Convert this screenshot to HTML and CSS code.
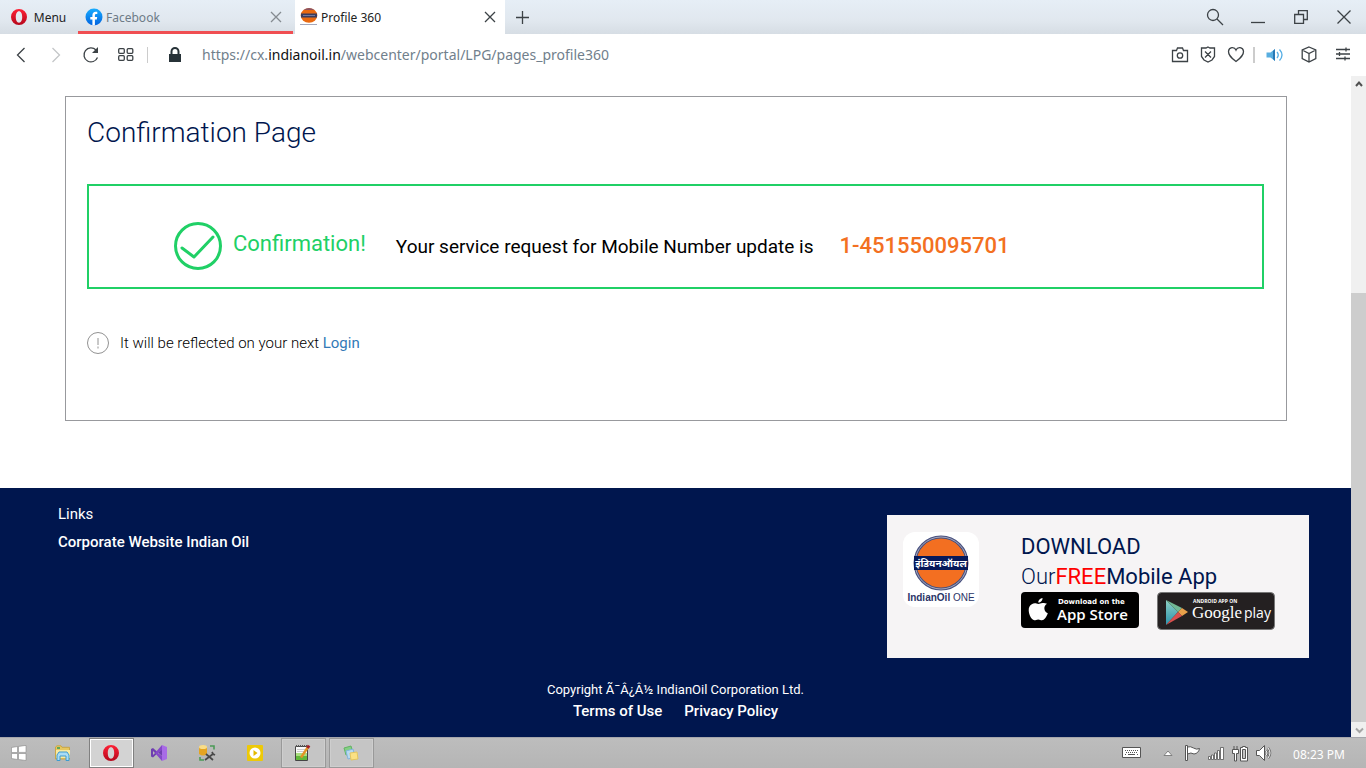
FILE: index.html
```html
<!DOCTYPE html>
<html lang="en">
<head>
<meta charset="utf-8">
<meta name="viewport" content="width=device-width, initial-scale=1">
<title>Profile 360</title>
<link rel="stylesheet" href="styles.css">
</head>
<body>
<svg class="defs" aria-hidden="true">
  <defs>
    <linearGradient id="opera" x1="0" y1="0" x2="0" y2="1"><stop offset="0" stop-color="#ff2136"/><stop offset="1" stop-color="#b5071b"/></linearGradient>
    <linearGradient id="fb" x1="0" y1="0" x2="0" y2="1"><stop offset="0" stop-color="#18acfe"/><stop offset="1" stop-color="#0163e0"/></linearGradient>
    <linearGradient id="playfill" x1="0" y1="0" x2="0" y2="1"><stop offset="0" stop-color="#8fd0c4"/><stop offset="1" stop-color="#2b93ad"/></linearGradient>
    <symbol id="opera-o" viewBox="0 0 18 18"><path fill="url(#opera)" fill-rule="evenodd" d="M9 1a8 8 0 1 0 0 16A8 8 0 0 0 9 1zm0 2.300c2.100 0 3.200 2.500 3.200 5.700s-1.100 5.700-3.200 5.700S5.800 12.200 5.800 9 6.900 3.300 9 3.300z"/></symbol>
  </defs>
</svg>

<header class="tabstrip">
  <button class="menu" type="button"><svg width="18" height="18"><use href="#opera-o"/></svg>Menu</button>
  <div class="tab tab-alert">
    <svg width="18" height="18" viewBox="0 0 18 18"><circle cx="9" cy="9" r="8.500" fill="url(#fb)"/><path fill="#fff" d="M7.400 17.500v-6H5.300V9h2.100V7.300c0-2.300 1.300-3.500 3.200-3.500.9 0 1.700.1 1.700.1v2h-1c-1.100 0-1.400.7-1.400 1.300V9h2.300l-.4 2.500H9.900v6z"/></svg>
    <span class="tab-title">Facebook</span>
    <button type="button" class="tab-close" aria-label="Close Facebook"><svg width="12" height="12" viewBox="0 0 12 12"><path d="M1 1l10 10M11 1L1 11"/></svg></button>
  </div>
  <div class="tab tab-active">
    <svg width="18" height="18" viewBox="0 0 18 18"><ellipse cx="9" cy="7.500" rx="8.300" ry="7.300" fill="#e9690f"/><path fill="#8d5360" d="M3.500 2Q9-1.800 14.500 2z"/><path fill="#3a3d5f" d="M1 5.500h16v4H1z"/><path stroke="#77799a" d="M3 7.500h12"/><path stroke="#a3a7bb" d="M0 16.500h17"/></svg>
    <span class="tab-title">Profile 360</span>
    <button type="button" class="tab-close" aria-label="Close Profile 360"><svg width="12" height="12" viewBox="0 0 12 12"><path d="M1 1l10 10M11 1L1 11"/></svg></button>
  </div>
  <button type="button" class="new-tab" aria-label="New tab"><svg width="13" height="13" viewBox="0 0 13 13"><path d="M6.500 0v13M0 6.500h13"/></svg></button>
  <div class="window-buttons">
    <button type="button" aria-label="Search tabs"><svg width="18" height="18" viewBox="0 0 18 18"><circle cx="7" cy="7" r="5.500"/><path d="M11 11l6 6"/></svg></button>
    <button type="button" aria-label="Minimize"><svg width="14" height="14" viewBox="0 0 14 14"><path d="M0 12.500h14"/></svg></button>
    <button type="button" aria-label="Restore"><svg width="14" height="14" viewBox="0 0 14 14"><path d="M.7 4.500h8.800v8.800H.7zM4.500 4.500V.7h8.800v8.800H9.500"/></svg></button>
    <button type="button" aria-label="Close window"><svg width="14" height="14" viewBox="0 0 14 14"><path d="M.5.5l13 13M13.500.5l-13 13"/></svg></button>
  </div>
</header>

<nav class="addressbar" aria-label="Browser toolbar">
  <button type="button" aria-label="Back"><svg width="16" height="16" viewBox="0 0 16 16"><path d="M11.500 1L4.500 8l7 7"/></svg></button>
  <button type="button" class="faded" aria-label="Forward" disabled><svg width="16" height="16" viewBox="0 0 16 16"><path d="M4.500 1l7 7-7 7"/></svg></button>
  <button type="button" aria-label="Reload"><svg width="18" height="18" viewBox="0 0 18 18"><path d="M15.500 11.500A7 7 0 1 1 14 4"/><path class="solid" d="M16 1v6h-6z"/></svg></button>
  <button type="button" aria-label="Speed dial"><svg width="16" height="16" viewBox="0 0 16 16"><rect x=".7" y="1.700" width="5.600" height="4.600" rx="1"/><rect x="9.200" y="1.700" width="5.600" height="4.600" rx="1"/><rect x=".7" y="8.700" width="5.600" height="4.600" rx="1"/><rect x="9.200" y="8.700" width="5.600" height="4.600" rx="1"/></svg></button>
  <span class="divider"></span>
  <svg class="lock" width="14" height="18" viewBox="0 0 14 18"><path fill="#273238" d="M1 8h12v8H1z"/><path fill="none" stroke="#273238" stroke-width="2" d="M3.500 8V5.500a3.500 3.500 0 0 1 7 0V8"/></svg>
  <span class="url" role="textbox" contenteditable="true" spellcheck="false" aria-label="Address">https://cx.<b>indianoil.in</b>/webcenter/portal/LPG/pages_profile360</span>
  <button type="button" class="tool" aria-label="Snapshot"><svg width="18" height="16" viewBox="0 0 18 16"><path d="M1.500 3.500h4L6.500 1h5l1 2.500h4v11h-15z"/><circle cx="9" cy="8.500" r="2.700"/></svg></button>
  <button type="button" class="tool" aria-label="Ad blocker"><svg width="16" height="17" viewBox="0 0 16 17"><path d="M8 1l2 1h4.500v8.500L12 14l-4 2-4-2-2.500-3.500V2H6zM5 5.500l6 6M11 5.500l-6 6"/></svg></button>
  <button type="button" class="tool" aria-label="Bookmark"><svg width="18" height="17" viewBox="0 0 18 17"><path d="M9 4C7.500.5 2 .6 1.500 5.200 1.200 9.500 5 12.300 9 15.500c4-3.200 7.800-6 7.500-10.300C16 .6 10.500.5 9 4z"/></svg></button>
  <span class="divider divider-short"></span>
  <button type="button" class="extension" aria-label="Volume"><svg width="18" height="16" viewBox="0 0 18 16"><path fill="#58aee0" stroke="none" d="M.5 5.500h4L9 2v12l-4.500-3.500h-4z"/><path fill="#2878b5" stroke="none" d="M7 4l2-2v12l-2-2z"/><path class="wave" d="M11 5q2.500 3 0 6M13.500 2.500q5 5.500 0 11"/></svg></button>
  <button type="button" class="extension" aria-label="Extensions"><svg width="16" height="17" viewBox="0 0 16 17"><path d="M8 1l6.800 3v8.500L8 16l-6.800-3.500V4zM1.200 4L8 7.500 14.800 4M8 7.500V16"/></svg></button>
  <button type="button" class="extension" aria-label="Easy setup"><svg width="14" height="15" viewBox="0 0 14 15"><path d="M0 2.500h14M0 7h14M0 11.500h14M10 .5v4M3.500 5v4M9 9.500v4"/></svg></button>
</nav>

<div class="viewport">
  <div class="page">
    <main class="panel">
      <h1>Confirmation Page</h1>
      <section class="notice">
        <svg class="tick" width="48" height="48" viewBox="0 0 48 48"><circle cx="24" cy="24" r="22.500"/><path d="M8 26l12 9L39 15" stroke-linejoin="round" stroke-linecap="round"/></svg>
        <h2>Confirmation!</h2>
        <p>Your service request for Mobile Number update is</p>
        <strong>1-451550095701</strong>
      </section>
      <p class="hint">
        <svg width="22" height="22" viewBox="0 0 22 22"><circle cx="11" cy="11" r="10.500"/><path d="M11 6v7M11 14.500v2"/></svg>
        <span>It will be reflected on your next <a href="#login">Login</a></span>
      </p>
    </main>

    <footer class="footer">
      <div class="footer-top">
        <div class="links">
          <span>Links</span>
          <a href="#corporate">Corporate Website Indian Oil</a>
        </div>
        <aside class="app-card">
          <svg class="app-logo" width="76" height="76" viewBox="0 0 76 76">
            <rect width="76" height="75" rx="12" fill="#fff"/>
            <circle cx="38" cy="31" r="26" fill="#f36f21" stroke="#47507f" stroke-width="3"/>
            <circle cx="38" cy="31" r="26" fill="none" stroke="#a9a9bd" stroke-width="1"/>
            <path fill="#07195a" d="M11 24h54v14H11z"/>
            <text class="logo-hindi" x="38" y="35" text-anchor="middle">इंडियनऑयल</text>
            <text class="logo-name" x="38" y="69" text-anchor="middle"><tspan class="logo-bold">IndianOil</tspan> ONE</text>
          </svg>
          <div class="app-copy">
            <div>DOWNLOAD</div>
            <div><span class="thin">Our</span><span class="free">FREE</span>Mobile App</div>
            <div class="badges">
              <a href="#appstore" aria-label="Download on the App Store">
                <svg width="118" height="36" viewBox="0 0 118 36">
                  <rect width="118" height="36" rx="4"/>
                  <path fill="#fff" d="M21.500 6c.2 2.500-2 4.600-4.200 4.500-.2-2.200 2-4.400 4.200-4.500zM26 11.800c-4 2.300-3.200 8 .8 9.500-1.500 4-3.500 7-5.800 7-1.500 0-2-.9-3.800-.9s-2.400.9-3.800.9c-3.400 0-7.300-9-5-13.500 1.300-2.700 3.800-3.900 6.300-3.600 1.200.1 2 .7 2.900.7 1 0 2-.9 4-.9 1.800 0 3.300.5 4.400.8z"/>
                  <text class="store-small" x="37" y="12">Download on the</text>
                  <text class="store-name" x="36" y="28">App Store</text>
                </svg>
              </a>
              <a href="#googleplay" aria-label="Android app on Google Play">
                <svg width="118" height="38" viewBox="0 0 118 38">
                  <rect x=".5" y=".5" width="117" height="37" rx="4" fill="#242021" stroke="#777"/>
                  <path fill="url(#playfill)" d="M9 8l12 12L9 33z"/><path fill="#71b894" d="M9 8l16 8-4 4z"/><path fill="#e9a14b" d="M25 16l6 4-6 4-4-4z"/><path fill="#d9504e" d="M9 33l12-13 4 4z"/>
                  <text class="play-small" x="36" y="11">ANDROID APP ON</text>
                  <text class="play-google" x="35" y="26">Google</text>
                  <text class="play-name" x="87" y="26">play</text>
                </svg>
              </a>
            </div>
          </div>
        </aside>
      </div>
      <div class="legal">
        <span>Copyright Ã¯Â¿Â½ IndianOil Corporation Ltd.</span>
        <div class="legal-links"><a href="#terms">Terms of Use</a><a href="#privacy">Privacy Policy</a></div>
      </div>
    </footer>
  </div>
  <div class="scrollbar" aria-hidden="true">
    <svg width="15" height="15" viewBox="0 0 15 15"><path stroke="#505050" d="M5 10l3-3.500 3 3.500"/></svg>
    <span class="track"></span>
    <span class="thumb"></span>
    <svg width="15" height="15" viewBox="0 0 15 15"><path stroke="#a5a5a5" d="M5 6.500l3.500 3.500L12 6.500"/></svg>
  </div>
</div>

<div class="taskbar">
  <button type="button" class="task start" aria-label="Start"><svg width="16" height="16" viewBox="0 0 16 16"><path fill="#fff" stroke="#888" stroke-width=".6" d="M.5 2.500l6-1v6h-6zM7.500 1.400l7.500-1v7H7.500zM.5 8.500h6v6l-6-1zM7.500 8.500H15v7l-7.500-1z"/></svg></button>
  <button type="button" class="task" aria-label="File Explorer"><svg width="18" height="16" viewBox="0 0 18 16"><path fill="#e6c760" stroke="#c9a648" d="M1.500 14V2L3 .8h4l1 1.500h7.500V14z"/><path fill="#f8e9a1" d="M2 5h14v8H2z"/><path fill="#5fa85b" d="M3 2h3v2H3z"/><path fill="#a9dcf6" stroke="#3f9bcf" d="M3 15.500V10l2-3h8l2 3v5.500h-3V11H6v4.500z"/></svg></button>
  <button type="button" class="task task-current" aria-label="Opera"><svg width="18" height="18"><use href="#opera-o"/></svg></button>
  <button type="button" class="task" aria-label="Visual Studio"><svg width="18" height="18" viewBox="0 0 18 18"><path fill="#6f3fb0" fill-rule="evenodd" d="M1 5l2-1 9 8V5L3 13.500l-2-1zM3 7v4l2-2z"/><path fill="#a86be6" d="M12 1l5 2v12l-5 2z"/><path fill="#8548c9" d="M5 9l7-8v5L8 9l4 3v5z"/></svg></button>
  <button type="button" class="task" aria-label="Database tools"><svg width="18" height="18" viewBox="0 0 18 18"><path fill="#e5a421" d="M1 3v7q4 3 8 0V3z"/><ellipse cx="5" cy="3" rx="4" ry="2" fill="#f9dc87"/><path fill="none" stroke="#4b9b57" stroke-width="1.600" d="M12 2h4v3.500M2 13v3h4"/><path fill="none" stroke="#484848" stroke-width="1.700" d="M7 16l8-6M8 10l7 6M14 8l1 2 2 1"/></svg></button>
  <button type="button" class="task" aria-label="Media player"><svg width="16" height="16" viewBox="0 0 16 16"><rect width="16" height="16" rx="1" fill="#edc908"/><circle cx="8" cy="8" r="5.500" fill="#fff"/><path fill="#e2b900" d="M6.500 5v6l4-3z"/></svg></button>
  <button type="button" class="task task-open" aria-label="Text editor"><svg width="17" height="18" viewBox="0 0 17 18"><path fill="#fafafa" stroke="#444" d="M1.500 2.500h12v14h-12z"/><path stroke="#555" stroke-width="2" stroke-dasharray="1 1" d="M2 2h12"/><path stroke="#ccc" d="M3 5.500h8M3 7.500h8"/><path fill="#a9dd7e" d="M2 9h11v3H2z"/><path fill="#62b83a" d="M2 12h11v4H2z"/><path stroke="#e49325" stroke-width="2.400" d="M7 13.500L14 3"/><path stroke="#a31f28" stroke-width="3" d="M13.500 4l1.500-2.500"/></svg></button>
  <button type="button" class="task task-open" aria-label="Sticky notes"><svg width="18" height="18" viewBox="0 0 18 18"><path fill="#83cf83" stroke="#62b463" d="M2 4l7-2 2 7-7 2z"/><path fill="#b7d9f2" stroke="#83b5dc" d="M4 7l7-2 2 8-7 2z"/><path fill="#fbe184" stroke="#e3c55f" d="M8 9l7-1 1 7-7 1z"/></svg></button>

  <div class="tray">
    <button type="button" class="keyboard" aria-label="Touch keyboard"><svg width="20" height="12" viewBox="0 0 20 12"><path fill="#fff" stroke="#555" d="M.5.5h18v10H.5z"/><path stroke="#555" stroke-dasharray="1 1" d="M3 3.500h13M4 5.500h12"/><path stroke="#555" d="M3 7.500h1M6 7.500h7M15 7.500h1"/></svg></button>
    <button type="button" aria-label="Hidden icons"><svg width="10" height="6" viewBox="0 0 10 6"><path fill="#fff" stroke="#777" stroke-width=".9" d="M1 5.500L5 1l4 4.500z"/></svg></button>
    <button type="button" aria-label="Action center"><svg width="17" height="16" viewBox="0 0 17 16"><path fill="#fff" stroke="#555" d="M1.500.5h2v15h-2zM3.500 2q3-1 6 1 3 2 6 .5-1 5-5.500 5.500Q7 7 3.500 9z"/></svg></button>
    <button type="button" aria-label="Network"><svg width="17" height="14" viewBox="0 0 17 14"><path fill="#fff" stroke="#555" stroke-width=".8" d="M.5 10.500h2v3h-2zM3.500 9h2v4.500h-2zM6.500 7h2v6.500h-2zM9.500 4.500h2v9h-2zM12.500 1.500h3v12h-3z"/></svg></button>
    <button type="button" aria-label="Battery"><svg width="17" height="17" viewBox="0 0 17 17"><path fill="#fff" stroke="#555" d="M2 1v4M5 1v4M.5 4.500h6v4h-2V16h-2V8.500h-2zM8.500 2.500h2v-1h3v1h2V16h-7z"/><path fill="#c4c4c4" stroke="#555" d="M10.500 4.500h3v9h-3z"/></svg></button>
    <button type="button" aria-label="Volume control"><svg width="17" height="16" viewBox="0 0 17 16"><path fill="#fff" stroke="#555" d="M.5 5.500h3l5-5v15l-5-5h-3z"/><path fill="none" stroke="#666" stroke-width="2.500" d="M10 5.500q2 2.500 0 5M12 3q4 5 0 10"/><path fill="none" stroke="#fff" d="M10 5.500q2 2.500 0 5M12 3q4 5 0 10"/></svg></button>
    <time>08:23 PM</time>
  </div>
</div>
</body>
</html>
```
FILE: styles.css
```css
* { box-sizing: border-box; }

body {
  margin: 0;
  min-height: 100vh;
  display: flex;
  flex-direction: column;
  background: #fff;
  font-family: Roboto, "Noto Sans", sans-serif;
}

h1, h2, p { margin: 0; font-weight: 400; }
a { text-decoration: none; }
svg { display: block; flex: none; }
.defs { position: absolute; width: 0; height: 0; }

button {
  display: flex;
  align-items: center;
  justify-content: center;
  padding: 0;
  border: 0;
  background: none;
  color: inherit;
  font: inherit;
}

/* Tab strip */
.tabstrip {
  display: flex;
  height: 34px;
  background: linear-gradient(#e6eef6, #e1e8ef 60%, #d6dde4);
  color: #222;
  font: 12px "Noto Sans", sans-serif;
}
.tabstrip button svg, .addressbar button svg { fill: none; stroke: #3c4246; stroke-width: 1.3; }
.tabstrip .menu svg { stroke: none; }
.menu { width: 76px; margin-right: 2px; gap: 6px; }
.tab { display: flex; align-items: center; gap: 3px; padding: 0 7px; }
.tab-title { flex: 1; }
.tab-close { width: 20px; height: 20px; }
.tab-alert { width: 215px; border-bottom: 3px solid #f04e52; color: #6d7b87; }
.tab-alert > svg, .tab-alert .tab-title, .tab-alert .tab-close { margin-top: 3px; }
.tabstrip .tab-alert .tab-close svg { stroke: #858b91; }
.tab-active { width: 210px; margin-left: 2px; padding: 0 5px; background: #fff; }
.new-tab { width: 34px; }
.window-buttons { display: flex; margin-left: auto; padding-right: 1px; }
.window-buttons button { width: 43px; }

/* Address bar */
.addressbar { display: flex; align-items: center; height: 42px; padding: 0 6px 1px 3px; }
.addressbar button { width: 35px; height: 34px; }
.addressbar .faded svg { stroke: #c4c6c8; }
.addressbar button .solid { fill: #3c4246; stroke: none; }
.addressbar .wave { stroke: #55aee5; }
.addressbar .tool { width: 28px; }
.addressbar .extension { width: 34px; }
.divider { width: 1px; height: 16px; margin: 0 20px 0 4px; background: #ccc; }
.divider-short { width: 2px; margin: 0 3px; }
.url { flex: 1; margin-left: 20px; color: #71808c; font: 14px "Noto Sans", sans-serif; outline: 0; }
.url b { color: #111; font-weight: 400; }

/* Page area */
.viewport { flex: 1; display: flex; }
.page { flex: 1; display: flex; flex-direction: column; justify-content: space-between; }
.panel {
  min-height: 325px;
  margin: 20px 64px 0 65px;
  padding: 18px 22px 22px 21px;
  border: 1px solid #98999d;
}
.panel h1 { color: #00164e; font-size: 28px; font-weight: 300; line-height: 36px; }
.notice {
  display: flex;
  align-items: center;
  margin-top: 33px;
  padding: 36px 85px 17px;
  border: 2px solid #20d066;
}
.tick { fill: none; stroke: #20d066; stroke-width: 3; }
.notice h2 { margin: 0 30px 5px 11px; color: #20d066; font-size: 22px; }
.notice p { font-size: 19px; }
.notice strong { margin: 0 0 2px 26px; color: #f37021; font-size: 22px; font-weight: 500; }
.hint { display: flex; align-items: center; gap: 11px; margin-top: 43px; font-size: 15px; font-weight: 300; }
.hint svg { fill: none; stroke: #929292; }
.hint a { color: #337ab7; font-weight: 400; }

/* Footer */
.footer { padding: 16px 42px 15px 58px; background: #00164e; color: #fff; }
.footer a { color: #fff; font-weight: 500; }
.footer-top { display: flex; justify-content: space-between; }
.links { display: flex; flex-direction: column; gap: 8px; font-size: 15px; line-height: 20px; }
.app-card {
  display: flex;
  align-items: flex-start;
  gap: 42px;
  width: 422px;
  margin-top: 11px;
  padding: 17px 16px 28px;
  background: #f6f4f5;
  color: #00164e;
}
.app-copy { font-size: 22px; line-height: 30px; }
.thin { font-weight: 300; }
.free { color: #f00; }
.badges { display: flex; align-items: flex-start; gap: 18px; }
.legal { display: flex; flex-direction: column; align-items: center; margin: 22px 0 0 -16px; font-size: 13px; line-height: 20px; }
.legal-links { display: flex; gap: 22px; font-size: 15px; line-height: 22px; }

.logo-hindi { fill: #fff; font: 700 10px "Noto Sans", sans-serif; }
.logo-name { fill: #2b3567; font: 10px "Liberation Sans", sans-serif; }
.logo-bold { font-weight: 700; }
.badges text { fill: #fff; }
.store-small { font: 700 7px "DejaVu Sans", sans-serif; }
.store-name { font: 600 15px "Open Sans", sans-serif; }
.play-small { font: 700 5px "Open Sans", sans-serif; }
.play-google { font: 17px "Liberation Serif", serif; }
.play-name { font: 14px "Open Sans", sans-serif; }

/* Scrollbar */
.scrollbar { display: flex; flex-direction: column; width: 15px; background: #f0f0f0; }
.scrollbar path { fill: none; stroke-width: 2; }
.track { flex: 202; }
.thumb { flex: 429; background: #cdcdcd; }

/* Taskbar */
.taskbar {
  display: flex;
  gap: 3px;
  height: 31px;
  border-top: 1px solid #a5a6ac;
  background: linear-gradient(#bdbdbd, #b5b5b5);
}
.task { width: 45px; padding-right: 2px; }
.start { width: 38px; padding: 0; }
.task-current { border: 1px solid #808080; background: #d3d3d3; box-shadow: inset 0 0 0 1px #fff; }
.task-open { border: 1px solid #999; background: #c5c5c5; box-shadow: inset 0 0 0 1px #cecece; }
.tray { display: flex; align-items: center; margin-left: auto; padding-right: 21px; }
.tray button { width: 24px; height: 30px; }
.tray .keyboard { width: 48px; }
.tray time { margin: 3px 0 0 17px; color: #fff; font: 12px "Noto Sans", sans-serif; }
```
